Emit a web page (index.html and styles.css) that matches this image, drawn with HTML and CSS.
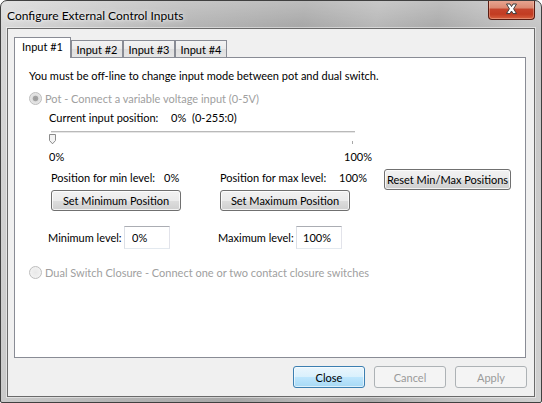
FILE: index.html
```html
<!DOCTYPE html>
<html>
<head>
  <meta charset="utf-8" />
  <link rel="stylesheet" href="styles.css">
</head>
<body>
  <div class="window">
    <div class="titlebar">
      <span class="title">Configure External Control Inputs</span>
      <div class="close-btn">
        <svg width="45" height="18" viewBox="0 0 45 18">
          <path d="M17.5 4 L21 4 L22.5 6.6 L24 4 L27.5 4 L24.6 8.8 L27.5 13.6 L24 13.6 L22.5 11 L21 13.6 L17.5 13.6 L20.4 8.8 Z" fill="#ffffff" stroke="#3d3d3d" stroke-width="1" stroke-linejoin="round"/>
        </svg>
      </div>
    </div>
    <div class="frame">
      <div class="client">
        <div class="tabs">
          <div class="tab active">Input #1</div>
          <div class="tab">Input #2</div>
          <div class="tab">Input #3</div>
          <div class="tab">Input #4</div>
        </div>
        <div class="pane">
          <div class="note">You must be off-line to change input mode between pot and dual switch.</div>
          <div class="radio-row"><span class="radio checked"></span>Pot - Connect a variable voltage input (0-5V)</div>
          <div class="current">
            <span class="cur-label">Current input position:</span>
            <span class="cur-value">0%</span>
            <span>(0-255:0)</span>
          </div>
          <div class="slider">
            <div class="track"></div>
            <svg class="thumb" width="7" height="11" viewBox="0 0 7 11">
              <path d="M0.5 0.5 H6.5 V6.5 L3.5 9.8 L0.5 6.5 Z" fill="#f3f3f3" stroke="#8c8c8c" stroke-width="1"/>
            </svg>
            <div class="ticks"><span></span><span></span></div>
          </div>
          <div class="scale"><span>0%</span><span>100%</span></div>
          <div class="positions">
            <div class="pos-col pos-min">
              <div class="pos-line"><span class="pos-label">Position for min level:</span><span>0%</span></div>
              <button class="btn set-btn">Set Minimum Position</button>
            </div>
            <div class="pos-col pos-max">
              <div class="pos-line"><span class="pos-label">Position for max level:</span><span>100%</span></div>
              <button class="btn set-btn">Set Maximum Position</button>
            </div>
            <button class="btn reset-btn">Reset Min/Max Positions</button>
          </div>
          <div class="levels">
            <div class="level level-min">
              <label class="level-label">Minimum level:</label>
              <input class="level-box" type="text" value="0%">
            </div>
            <div class="level level-max">
              <label class="level-label">Maximum level:</label>
              <input class="level-box" type="text" value="100%">
            </div>
          </div>
          <div class="radio-row dual"><span class="radio"></span>Dual Switch Closure - Connect one or two contact closure switches</div>
        </div>
        <div class="actions">
          <button class="btn default">Close</button>
          <button class="btn" disabled>Cancel</button>
          <button class="btn" disabled>Apply</button>
        </div>
      </div>
    </div>
  </div>
</body>
</html>
```

FILE: styles.css
```css
body {
  margin: 0;
  background: #ffffff;
  font-family: Lato, "Open Sans", sans-serif;
  font-size: 11px;
  color: #000;
  white-space: nowrap;
}

/* aero glass window */
.window {
  width: 542px;
  height: 403px;
  box-sizing: border-box;
  border: 1px solid #404040;
  border-radius: 7px 7px 2px 2px;
  display: flex;
  flex-direction: column;
  overflow: hidden;
  background:
    linear-gradient(180deg, rgba(255,255,255,0.25) 0, rgba(255,255,255,0) 28px),
    linear-gradient(100deg, #d8d8d8 0%, #cacaca 12%, #b4b4b4 30%, #a6a6a6 50%, #b6b6b6 62%, #a9a9a9 72%, #c2c2c2 86%, #d0d0d0 100%);
}
.titlebar {
  height: 27px;
  display: flex;
  align-items: flex-start;
  padding-left: 6px;
}
.title {
  font-size: 12px;
  line-height: 29px;
  text-shadow: 0 0 6px rgba(255,255,255,0.9), 0 0 3px rgba(255,255,255,0.8);
}
.close-btn {
  margin-left: auto;
  margin-right: 6px;
  margin-top: -1px;
  width: 47px;
  height: 20px;
  box-sizing: border-box;
  border: 1px solid #5a1c12;
  border-top: none;
  border-radius: 0 0 4px 4px;
  background: linear-gradient(180deg, #e9a894 0%, #dc8a73 40%, #c5432b 50%, #c23c22 75%, #d7603f 100%);
  box-shadow: inset 0 0 0 1px rgba(255,220,200,0.35);
}
.close-btn svg {
  display: block;
}

.frame {
  flex: 1;
  padding: 0 6px 5px 6px;
  display: flex;
}
.client {
  flex: 1;
  border: 1px solid #6a6a6a;
  box-shadow: 0 0 0 1px rgba(255,255,255,0.45);
  background: #f0f0f0;
  padding: 8px 8px 0 6px;
  display: flex;
  flex-direction: column;
}

/* tabs */
.tabs {
  height: 20px;
  display: flex;
  align-items: flex-end;
}
.tab {
  width: 52px;
  height: 17px;
  box-sizing: border-box;
  border: 1px solid #898c95;
  border-bottom: none;
  background: linear-gradient(180deg, #f3f3f3 0%, #ebebeb 50%, #dedede 51%, #e6e6e6 100%);
  text-align: center;
  line-height: 17px;
}
.tab.active {
  width: 57px;
  height: 21px;
  margin-bottom: -1px;
  background: #ffffff;
  position: relative;
  z-index: 1;
  line-height: 18px;
}

.pane {
  height: 301px;
  box-sizing: border-box;
  border: 1px solid #898c95;
  background: #ffffff;
}
.note {
  margin-top: 10px;
  padding-left: 14px;
  line-height: 16px;
}
.radio-row {
  margin-top: 6px;
  padding-left: 14px;
  height: 16px;
  display: flex;
  align-items: center;
  color: #a0a0a0;
}
.radio {
  flex-shrink: 0;
  width: 13px;
  height: 13px;
  box-sizing: border-box;
  border-radius: 50%;
  border: 1px solid #bdbdbd;
  background: radial-gradient(circle, #e8e8e8 0, #f6f6f6 100%);
  margin-right: 3px;
}
.radio.checked {
  background: radial-gradient(circle, #9c9c9c 0, #a4a4a4 2.4px, #dedede 3.2px, #efefef 100%);
}
.current {
  margin-top: 4px;
  padding-left: 34px;
  height: 16px;
  line-height: 16px;
  display: flex;
}
.cur-label {
  flex-shrink: 0;
  width: 122px;
}
.cur-value {
  flex-shrink: 0;
  width: 21px;
}

/* trackbar */
.slider {
  margin-top: 2px;
  margin-left: 34px;
  width: 310px;
  height: 18px;
  position: relative;
}
.track {
  margin-left: 2px;
  margin-top: 5px;
  width: 304px;
  height: 1px;
  background: #b9b9b9;
  border-bottom: 1px solid #e6e6e6;
}
.thumb {
  position: absolute;
  left: 0;
  top: 3px;
}
.ticks {
  margin-top: 8px;
  display: flex;
}
.ticks span {
  width: 1px;
  height: 3px;
  background: #a8a8a8;
  margin-left: 3px;
}
.ticks span + span {
  margin-left: 299px;
}
.scale {
  padding-left: 34px;
  width: 323px;
  height: 16px;
  line-height: 16px;
  display: flex;
  justify-content: space-between;
}

.positions {
  margin-top: 4px;
  padding-left: 36px;
  display: flex;
  align-items: flex-start;
}
.pos-col {
  flex-shrink: 0;
  display: flex;
  flex-direction: column;
}
.pos-min {
  width: 169px;
}
.pos-max {
  width: 164px;
}
.pos-line {
  margin-top: 1px;
  height: 16px;
  line-height: 16px;
  display: flex;
}
.pos-label {
  flex-shrink: 0;
}
.pos-min .pos-label {
  width: 113px;
}
.pos-max .pos-label {
  width: 119px;
}
.btn {
  flex-shrink: 0;
  height: 21px;
  box-sizing: border-box;
  padding: 0;
  border: 1px solid #707070;
  border-radius: 3px;
  background: linear-gradient(180deg, #f2f2f2 0%, #ebebeb 50%, #dddddd 51%, #cfcfcf 100%);
  box-shadow: inset 0 0 0 1px rgba(255,255,255,0.75);
  font-family: inherit;
  font-size: 11px;
  color: #000;
  white-space: nowrap;
}
.set-btn {
  margin-top: 4px;
  width: 130px;
}
.reset-btn {
  width: 127px;
}

.levels {
  margin-top: 15px;
  padding-left: 33px;
  display: flex;
}
.level {
  flex-shrink: 0;
  display: flex;
  align-items: center;
}
.level-min {
  width: 170px;
}
.level-label {
  flex-shrink: 0;
}
.level-min .level-label {
  width: 76px;
}
.level-max .level-label {
  width: 78px;
}
.level-box {
  width: 46px;
  height: 23px;
  box-sizing: border-box;
  margin: 0;
  padding: 0 0 0 7px;
  border: 1px solid;
  border-color: #abadb3 #e2e3ea #e3e9ef #dbdfe6;
  font-family: inherit;
  font-size: 11px;
  color: #000;
}
.level-max .level-box {
  padding-left: 6px;
}
.dual {
  margin-top: 15px;
}

/* dialog buttons */
.actions {
  margin-top: 8px;
  margin-right: -1px;
  display: flex;
  justify-content: flex-end;
  gap: 9px;
}
.actions .btn {
  width: 72px;
  height: 22px;
}
.actions .btn.default {
  border-color: #3c7fb1;
  background: linear-gradient(180deg, #eaf6fd 0%, #d9f0fc 50%, #bee6fd 51%, #a7d9f5 100%);
  box-shadow: inset 0 0 0 1px rgba(255,255,255,0.6);
}
.actions .btn:disabled {
  border-color: #adb2b5;
  background: #f4f4f4;
  box-shadow: none;
  color: #9a9a9a;
}
```
